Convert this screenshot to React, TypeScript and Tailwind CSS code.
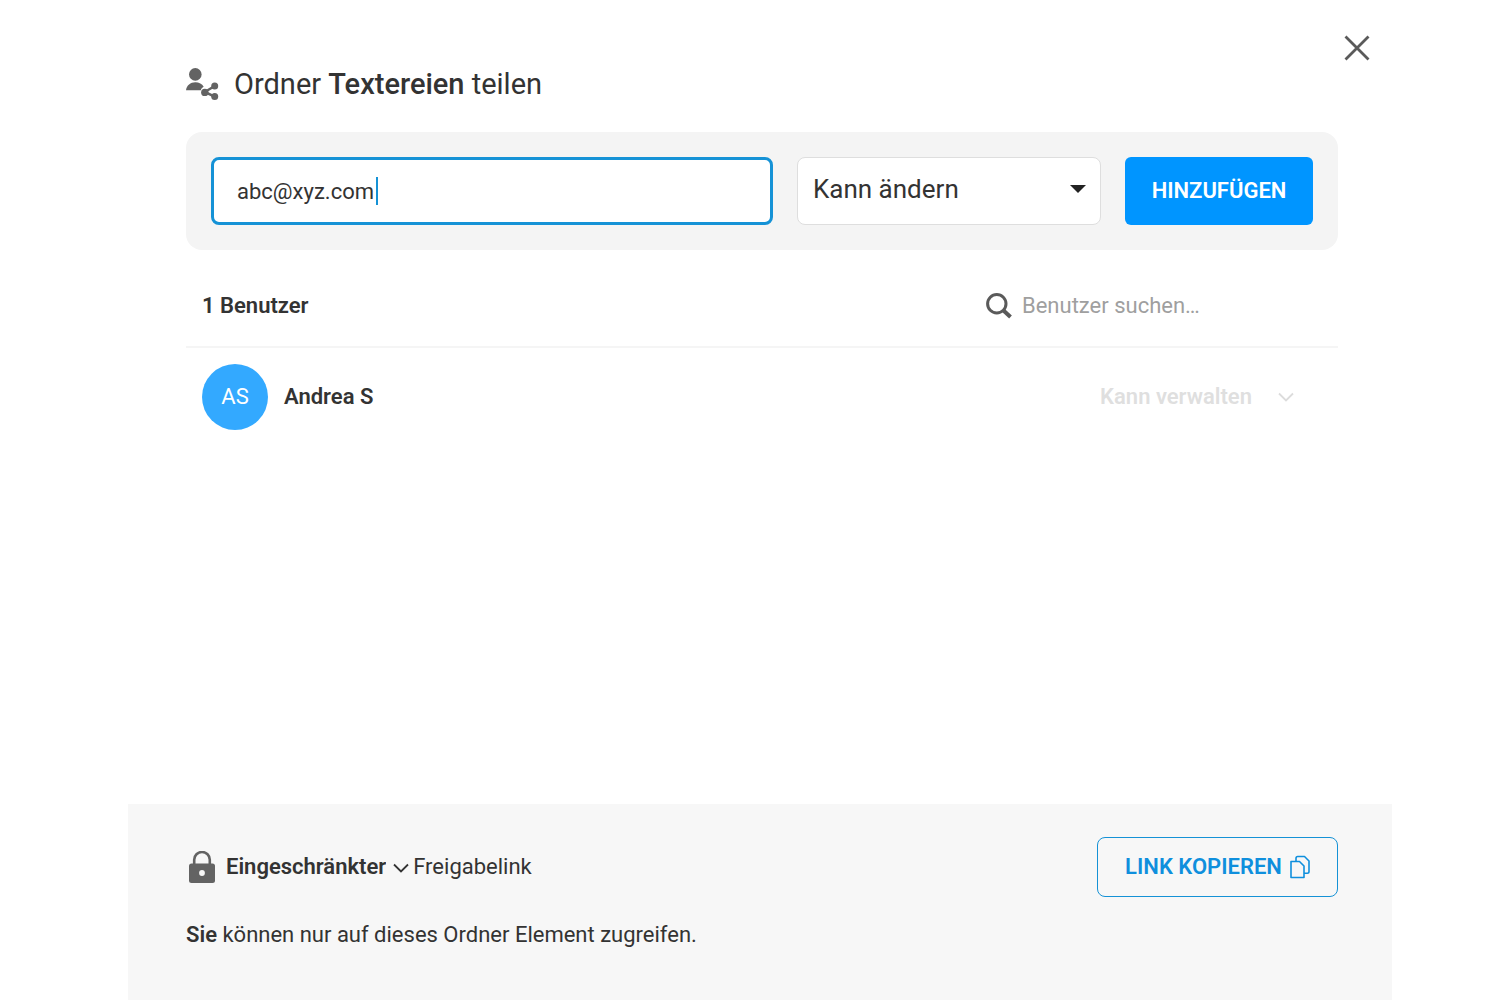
import { useState } from 'react';

const users = [{ initials: 'AS', name: 'Andrea S', role: 'Kann verwalten' }];

function ShareUserIcon() {
  return (
    <svg className="h-9 w-9 shrink-0 text-[#636363]" viewBox="0 0 36 36" fill="currentColor" aria-hidden="true">
      <circle cx="9.3" cy="8.4" r="6.3" />
      <path d="M0 24.3C0.6 19.400 4.500 16.300 9.300 16.300c3.800 0 6.800 1.600 8.400 4.400-1.600.8-2.600 2-2.900 3.600z" />
      <circle cx="18.800" cy="26.400" r="3.700" />
      <circle cx="28.700" cy="20" r="3.500" />
      <circle cx="28.700" cy="30.600" r="3.500" />
      <path d="M28.700 20 18.800 26 28.700 30.600" fill="none" stroke="currentColor" strokeWidth="2.500" />
    </svg>
  );
}

function ChevronIcon({ className }: { className: string }) {
  return (
    <svg className={className} viewBox="0 0 16 10" fill="none" stroke="currentColor" strokeWidth="1.8" aria-hidden="true">
      <path d="M1 1.500 8 8.500 15 1.500" />
    </svg>
  );
}

function LockIcon() {
  return (
    <svg className="h-8 w-8 shrink-0 text-[#636363]" viewBox="0 0 32 32" aria-hidden="true">
      <path d="M8.200 14V8.800a7.800 7.800 0 0 1 15.600 0V14" fill="none" stroke="currentColor" strokeWidth="2.600" />
      <rect x="3" y="12.500" width="26" height="19.500" rx="2.500" fill="currentColor" />
      <circle cx="16" cy="22" r="2.900" fill="#f7f7f7" />
    </svg>
  );
}

function CopyIcon() {
  return (
    <svg className="h-6 w-5" viewBox="0 0 20 24" fill="none" stroke="currentColor" strokeWidth="1.600" strokeLinejoin="round" aria-hidden="true">
      <path d="M1 6.500h8.500l4.500 4.500v11.500H1z" />
      <path d="M6 6.500V3.200C6 2 6.700 1.500 7.700 1.500H14.500L19 6v10.500c0 1-.6 1.700-1.700 1.700H14" />
    </svg>
  );
}

export default function App() {
  const [email, setEmail] = useState('abc@xyz.com');
  const [search, setSearch] = useState('');

  return (
    <main className="flex min-h-screen flex-col bg-white pr-[108px] pl-32 font-[Roboto,sans-serif] text-[22px] leading-8 text-[#333]">
      {/* Header */}
      <header className="pt-[35px] pr-[22px] pl-[58px]">
        <div className="flex justify-end">
          <button type="button" aria-label="Schließen" className="text-[#5a5a5a]">
            <svg className="size-[26px]" viewBox="0 0 26 26" fill="none" stroke="currentColor" strokeWidth="2.800" aria-hidden="true">
              <path d="M1.500 1.500l23 23M24.500 1.500l-23 23" />
            </svg>
          </button>
        </div>
        <div className="mt-[5px] flex items-center gap-3">
          <ShareUserIcon />
          <h1 className="text-[29px] leading-9">
            Ordner <strong className="font-medium">Textereien</strong> teilen
          </h1>
        </div>
      </header>

      <section className="flex-1 pt-[30px] pr-[54px] pl-[58px]">
        {/* Add user */}
        <form className="flex gap-6 rounded-2xl bg-[#f4f4f4] p-[25px]" onSubmit={(e) => e.preventDefault()}>
          <div className="relative min-w-0 flex-1">
            <input
              type="email"
              aria-label="E-Mail-Adresse"
              value={email}
              onChange={(e) => setEmail(e.target.value)}
              className="h-[68px] w-full rounded-lg border-3 border-[#1592d6] bg-white px-[23px] outline-none"
            />
            <span className="pointer-events-none absolute top-5 left-[165px] h-7 w-0.5 bg-[#1592d6]" />
          </div>
          <div className="relative w-[304px]">
            <select
              aria-label="Berechtigung"
              className="h-[68px] w-full appearance-none rounded-lg border border-[#dedede] bg-white px-[15px] pb-1 text-[26px]"
            >
              <option>Kann ändern</option>
              <option>Kann verwalten</option>
            </select>
            <svg className="pointer-events-none absolute top-7 right-[15px] h-2 w-4" viewBox="0 0 16 8" aria-hidden="true">
              <path d="M0 0h16L8 8z" fill="#222" />
            </svg>
          </div>
          <button type="submit" className="h-[68px] w-[188px] rounded-md bg-[#0095ff] font-semibold text-white">
            HINZUFÜGEN
          </button>
        </form>

        {/* User list */}
        <div className="flex h-[98px] items-center justify-between border-b-2 border-[#f5f5f5] pt-4 pl-4">
          <h2 className="font-semibold">1 Benutzer</h2>
          <label className="flex w-[352px] items-center gap-[10px]">
            <svg className="size-[26px] shrink-0" viewBox="0 0 26 26" fill="none" stroke="#5a5a5a" aria-hidden="true">
              <circle cx="10.800" cy="10.800" r="9.200" strokeWidth="3" />
              <path d="M17.500 17.500 24.500 24" strokeWidth="4" />
            </svg>
            <input
              type="text"
              aria-label="Benutzer suchen"
              placeholder="Benutzer suchen…"
              value={search}
              onChange={(e) => setSearch(e.target.value)}
              className="w-full min-w-0 outline-none placeholder:text-[#9f9f9f]"
            />
          </label>
        </div>
        <ul>
          {users.map((user) => (
            <li key={user.name} className="flex items-center gap-4 py-4 pr-11 pl-4">
              <span className="flex size-[66px] items-center justify-center rounded-full bg-[#33a9ff] text-white">
                {user.initials}
              </span>
              <span className="flex-1 font-semibold">{user.name}</span>
              <div className="relative">
                <select
                  disabled
                  aria-label={`Berechtigung von ${user.name}`}
                  className="field-sizing-content appearance-none pr-[42px] font-semibold text-[#dfdfdf] disabled:opacity-100"
                >
                  <option>{user.role}</option>
                </select>
                <ChevronIcon className="pointer-events-none absolute top-[11px] right-0 h-[10px] w-4 text-[#dcdcdc]" />
              </div>
            </li>
          ))}
        </ul>
      </section>

      {/* Share link */}
      <footer className="h-[196px] bg-[#f7f7f7] pt-[33px] pr-[54px] pl-[58px]">
        <div className="flex items-center justify-between">
          <div className="flex items-center">
            <LockIcon />
            <div className="relative ml-2">
              <select aria-label="Linktyp" className="field-sizing-content appearance-none pr-[27px] font-semibold">
                <option>Eingeschränkter</option>
              </select>
              <ChevronIcon className="pointer-events-none absolute top-3 right-1 h-[10px] w-4" />
            </div>
            <span>Freigabelink</span>
          </div>
          <button
            type="button"
            className="flex h-[60px] w-[241px] items-center justify-center gap-2 rounded-lg border border-[#1592d6] font-semibold text-[#0f8fdd]"
          >
            LINK KOPIEREN
            <CopyIcon />
          </button>
        </div>
        <p className="mt-[22px]">
          <strong className="font-semibold">Sie</strong> können nur auf dieses Ordner Element zugreifen.
        </p>
      </footer>
    </main>
  );
}
